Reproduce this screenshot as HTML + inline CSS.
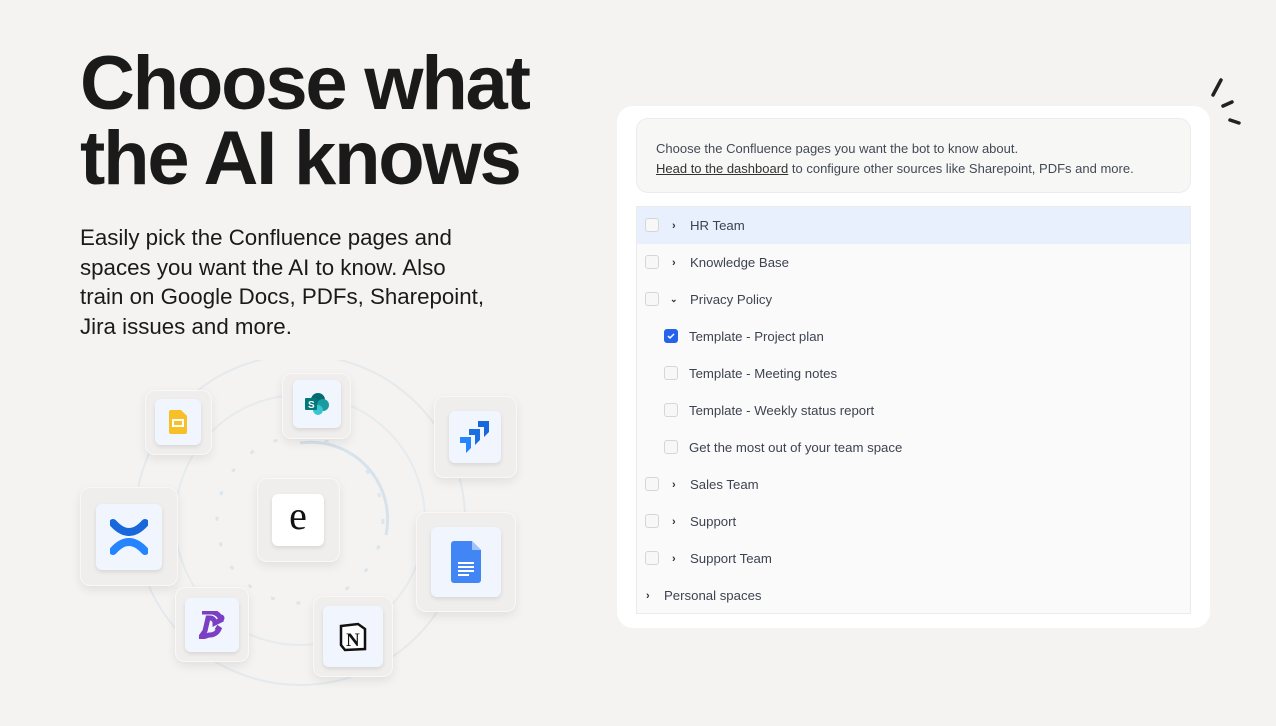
<!DOCTYPE html>
<html><head><meta charset="utf-8"><style>
*{margin:0;padding:0;box-sizing:border-box}
body{width:1276px;height:726px;background:#f4f3f1;font-family:"Liberation Sans",sans-serif;position:relative;overflow:hidden}
h1{position:absolute;left:80px;top:46px;font-size:76px;line-height:75px;font-weight:700;color:#1a1a1a;letter-spacing:-2.2px}
p.lead{position:absolute;left:80px;top:223px;font-size:22.3px;line-height:29.6px;color:#1a1a1a;white-space:nowrap}
.o{position:absolute;background:#efeeec;border-radius:10px;box-shadow:0 4px 10px rgba(0,0,0,.08),inset 0 0 0 1px rgba(255,255,255,.6)}
.i{position:absolute;background:#f1f6fe;border-radius:6px;box-shadow:0 2px 4px rgba(0,0,0,.1);display:flex;align-items:center;justify-content:center}
.card{position:absolute;left:617px;top:106px;width:593px;height:522px;background:#fff;border-radius:16px}
.info{position:absolute;left:19px;top:12px;width:555px;height:75px;background:#f7f7f6;border:1px solid #ececec;border-radius:12px;padding:20px 19px;font-size:13px;line-height:19.5px;color:#444a55}
.info u{color:#333}
.list{position:absolute;left:19px;top:100px;width:555px;height:408px;background:#fafafa;border:1px solid #ebebeb}
.row{height:37px;display:flex;align-items:center;font-size:13.2px;color:#3d4350;position:relative}
.row.hl{background:#e7f0fc}
.cb{width:14px;height:14px;border:1px solid #d4d6da;border-radius:3px;background:#f7f7f7;position:absolute;top:11px}
.cb.on{background:#2563eb;border-color:#2563eb}
.ch{position:absolute;font-size:11px;font-weight:700;color:#333}
.t{position:absolute}
</style></head><body>
<h1>Choose what<br>the AI knows</h1>
<p class="lead">Easily pick the Confluence pages and<br>spaces you want the AI to know. Also<br>train on Google Docs, PDFs, Sharepoint,<br>Jira issues and more.</p>

<svg style="position:absolute;left:0;top:360px" width="560" height="366">
<circle cx="300" cy="160" r="165" fill="none" stroke="#e4e9ee" stroke-width="2"/>
<circle cx="300" cy="160" r="125" fill="none" stroke="#e6ebef" stroke-width="2"/>
<path d="M300 83 A77 77 0 0 1 386 175" fill="none" stroke="#d6e2ec" stroke-width="3"/>
<circle cx="300" cy="160" r="83" fill="none" stroke="#dbe5ee" stroke-width="3" stroke-dasharray="4 22"/>
</svg>

<div class="o" style="left:145px;top:390px;width:67px;height:65px"></div>
<div class="i" style="left:155px;top:399px;width:46px;height:46px"><svg width="18" height="24" viewBox="0 0 18 24"><path d="M0 2a2 2 0 0 1 2-2h10l6 6v16a2 2 0 0 1-2 2H2a2 2 0 0 1-2-2z" fill="#f6c026"/><rect x="4" y="10" width="10" height="6" fill="none" stroke="#fff" stroke-width="2"/></svg></div>

<div class="o" style="left:282px;top:373px;width:69px;height:66px"></div>
<div class="i" style="left:293px;top:380px;width:48px;height:48px"><svg width="26" height="24"><circle cx="14" cy="8" r="7" fill="#036c70"/><circle cx="19" cy="13" r="6" fill="#1a9ba1"/><circle cx="14" cy="18" r="5" fill="#37c6d0"/><rect x="1" y="6" width="12" height="12" rx="1" fill="#03787c"/><text x="4" y="16" font-size="10" fill="#fff" font-family="Liberation Sans" font-weight="700">S</text></svg></div>

<div class="o" style="left:434px;top:396px;width:83px;height:82px"></div>
<div class="i" style="left:449px;top:411px;width:52px;height:52px"><svg width="30" height="32" viewBox="0 0 30 32"><path d="M18 0h11v11l-5 5V6h-6z" fill="#1868db"/><path d="M9 8h11v11l-5 5V14H9z" fill="#1d6fe0"/><path d="M0 16h11v11l-5 5V22H0z" fill="#2684ff"/></svg></div>

<div class="o" style="left:80px;top:487px;width:98px;height:99px"></div>
<div class="i" style="left:96px;top:504px;width:66px;height:66px"><svg width="38" height="36" viewBox="0 0 38 36"><path d="M3 4 Q19 22 35 4" fill="none" stroke="#1868db" stroke-width="8" stroke-linecap="round"/><path d="M3 32 Q19 14 35 32" fill="none" stroke="#2684ff" stroke-width="8" stroke-linecap="round"/></svg></div>

<div class="o" style="left:257px;top:478px;width:83px;height:84px"></div>
<div class="i" style="left:272px;top:494px;width:52px;height:52px;background:#fff"><span style="font-family:'Liberation Serif',serif;font-size:40px;line-height:40px;color:#111;margin-top:-8px">e</span></div>

<div class="o" style="left:416px;top:512px;width:100px;height:100px"></div>
<div class="i" style="left:431px;top:527px;width:70px;height:70px"><svg width="30" height="42" viewBox="0 0 30 42"><path d="M0 3a3 3 0 0 1 3-3h18l9 9v30a3 3 0 0 1-3 3H3a3 3 0 0 1-3-3z" fill="#4285f4"/><path d="M21 0v9h9z" fill="#a1c2fa"/><path d="M7 22h16M7 26h16M7 30h16M7 34h11" stroke="#fff" stroke-width="2"/></svg></div>

<div class="o" style="left:175px;top:587px;width:74px;height:75px"></div>
<div class="i" style="left:185px;top:598px;width:54px;height:54px"><svg width="26" height="28" viewBox="0 0 26 28"><path d="M3 1h10a10 10 0 0 1 9 8l-6 3a5 5 0 0 0-5-5H9l-3 13 -5 7 9-3a10 10 0 0 0 10-6l-3-2" fill="none" stroke="#7b3fc4" stroke-width="5"/><circle cx="22" cy="7" r="3.5" fill="#7b3fc4"/></svg></div>

<div class="o" style="left:313px;top:596px;width:80px;height:81px"></div>
<div class="i" style="left:323px;top:606px;width:60px;height:61px"><svg width="30" height="30" viewBox="0 0 30 30"><path d="M3 4 20 2 27 7V27L7 28 3 23Z" fill="#fff" stroke="#111" stroke-width="2.5"/><text x="8" y="24" font-family="Liberation Serif" font-weight="700" font-size="19" fill="#111">N</text></svg></div>

<svg style="position:absolute;left:1205px;top:75px" width="40" height="55"><path d="M16 5 L8 20" stroke="#222" stroke-width="3.5" stroke-linecap="round"/><path d="M27 27 L18 31" stroke="#222" stroke-width="3.5" stroke-linecap="round"/><path d="M25 45 L34 48" stroke="#222" stroke-width="3.5" stroke-linecap="round"/></svg>

<div class="card">
<div class="info">Choose the Confluence pages you want the bot to know about.<br><u>Head to the dashboard</u> to configure other sources like Sharepoint, PDFs and more.</div>
<div class="list">
<div class="row hl"><span class="cb" style="left:8px"></span><span class="ch" style="left:35px">›</span><span class="t" style="left:53px">HR Team</span></div>
<div class="row"><span class="cb" style="left:8px"></span><span class="ch" style="left:35px">›</span><span class="t" style="left:53px">Knowledge Base</span></div>
<div class="row"><span class="cb" style="left:8px"></span><span class="ch" style="left:33px;font-size:9px">⌄</span><span class="t" style="left:53px">Privacy Policy</span></div>
<div class="row"><span class="cb on" style="left:27px"><svg width="12" height="12" style="position:absolute;left:0;top:0"><path d="M3 6l2 2 4-4" stroke="#fff" stroke-width="1.5" fill="none"/></svg></span><span class="t" style="left:52px">Template - Project plan</span></div>
<div class="row"><span class="cb" style="left:27px"></span><span class="t" style="left:52px">Template - Meeting notes</span></div>
<div class="row"><span class="cb" style="left:27px"></span><span class="t" style="left:52px">Template - Weekly status report</span></div>
<div class="row"><span class="cb" style="left:27px"></span><span class="t" style="left:52px">Get the most out of your team space</span></div>
<div class="row"><span class="cb" style="left:8px"></span><span class="ch" style="left:35px">›</span><span class="t" style="left:53px">Sales Team</span></div>
<div class="row"><span class="cb" style="left:8px"></span><span class="ch" style="left:35px">›</span><span class="t" style="left:53px">Support</span></div>
<div class="row"><span class="cb" style="left:8px"></span><span class="ch" style="left:35px">›</span><span class="t" style="left:53px">Support Team</span></div>
<div class="row"><span class="ch" style="left:9px">›</span><span class="t" style="left:27px">Personal spaces</span></div>
</div>
</div>
</body></html>
